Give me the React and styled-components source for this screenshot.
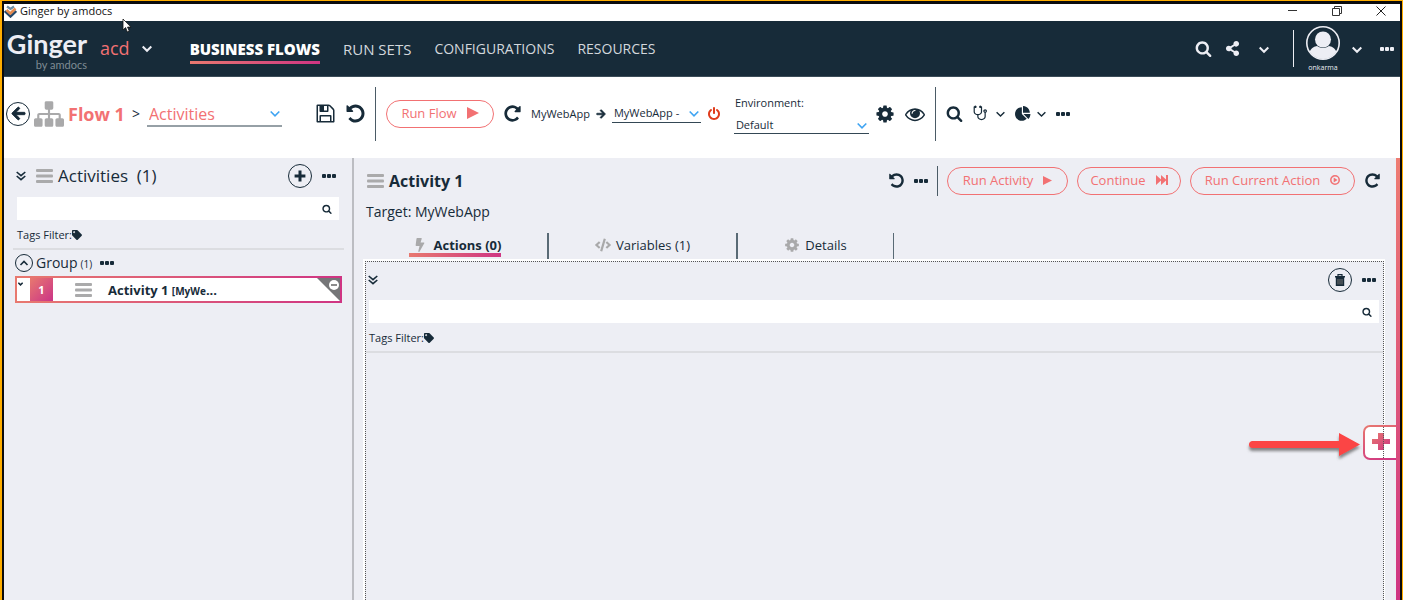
import React from "react";
import styled, { createGlobalStyle, css } from "styled-components";
import { FaArrowLeft, FaArrowRight, FaShareAlt, FaTag, FaBolt, FaCode } from "react-icons/fa";

const ink = "#172b39";
const coral = "#f27173";
const panelBg = "#edeef4";
const ginger = "linear-gradient(90deg, #e8796f, #cf3483)";

const GlobalStyle = createGlobalStyle`
  *, *::before, *::after { box-sizing: border-box; }
  body {
    margin: 0;
    font-family: "Open Sans", "Noto Sans", sans-serif;
    font-size: 14px;
    color: ${ink};
    overflow: hidden;
  }
  button, input, select { font-family: inherit; color: inherit; margin: 0; padding: 0; }
  svg { display: block; flex: none; }
`;

/* ---------- icons ---------- */

const paths = {
  repeat:
    "M1664 256v448q0 26-19 45t-45 19h-448q-42 0-59-40-17-39 14-69l138-138q-148-137-349-137-104 0-198.5 40.5t-163.5 109.5-109.5 163.5-40.5 198.5 40.5 198.5 109.5 163.5 163.5 109.5 198.5 40.5q119 0 225-52t179-147q7-10 23-12 15 0 25 9l137 138q9 8 9.5 20.5t-7.5 22.5q-109 132-264 204.5t-327 72.5q-156 0-298-61t-245-164-164-245-61-298 61-298 164-245 245-164 298-61q147 0 284.5 55.5t244.5 156.5l130-129q29-31 70-14 39 17 39 59z",
  save:
    "M512 1536h768v-384h-768v384zm896 0h128v-896q0-14-10-38.5t-20-34.5l-281-281q-10-10-34-20t-39-10v416q0 40-28 68t-68 28h-576q-40 0-68-28t-28-68v-416h-128v1280h128v-416q0-40 28-68t68-28h832q40 0 68 28t28 68v416zm-384-928v-320q0-13-9.5-22.5t-22.5-9.5h-192q-13 0-22.5 9.5t-9.5 22.5v320q0 13 9.5 22.5t22.5 9.5h192q13 0 22.5-9.5t9.5-22.5zm640 32v928q0 40-28 68t-68 28h-1344q-40 0-68-28t-28-68v-1344q0-40 28-68t68-28h928q40 0 88 20t76 48l280 280q28 28 48 76t20 88z",
  search:
    "M1216 832q0-185-131.5-316.5t-316.5-131.5-316.5 131.5-131.5 316.5 131.5 316.5 316.5 131.5 316.5-131.5 131.5-316.5zm512 832q0 52-38 90t-90 38q-54 0-90-38l-343-342q-179 124-399 124-143 0-273.5-55.5t-225-150-150-225-55.5-273.5 55.5-273.5 150-225 225-150 273.5-55.5 273.5 55.5 225 150 150 225 55.5 273.5q0 220-124 399l343 343q37 37 37 90z",
  gear:
    "M1152 896q0-106-75-181t-181-75-181 75-75 181 75 181 181 75 181-75 75-181zm512-109v222q0 12-8 23t-20 13l-185 28q-19 54-39 91 35 50 107 138 10 12 10 25t-9 23q-27 37-99 108t-94 71q-12 0-26-9l-138-108q-44 23-91 38-16 136-29 186-7 28-36 28h-222q-14 0-24.5-8.5t-11.5-21.5l-28-184q-49-16-90-37l-141 107q-10 9-25 9-14 0-25-11-126-114-165-168-7-10-7-23 0-12 8-23 15-21 51-66.5t54-70.5q-27-50-41-99l-183-27q-13-2-21-12.5t-8-23.5v-222q0-12 8-23t19-13l186-28q14-46 39-92-40-57-107-138-10-12-10-24 0-10 9-23 26-36 98.5-107.5t94.5-71.5q13 0 26 10l138 107q44-23 91-38 16-136 29-186 7-28 36-28h222q14 0 24.5 8.5t11.5 21.5l28 184q49 16 90 37l142-107q9-9 24-9 13 0 25 10 129 119 165 170 7 8 7 22 0 12-8 23-15 21-51 66.5t-54 70.5q26 50 41 98l183 28q13 2 21 12.5t8 23.5z",
  eye:
    "M1664 960q-152-236-381-353 61 104 61 225 0 185-131.5 316.5t-316.5 131.5-316.5-131.5-131.5-316.5q0-121 61-225-229 117-381 353 133 205 333.5 326.5t434.5 121.5 434.5-121.5 333.5-326.5zm-720-384q0-20-14-34t-34-14q-125 0-214.5 89.5t-89.5 214.5q0 20 14 34t34 14 34-14 14-34q0-86 61-147t147-61q20 0 34-14t14-34zm848 384q0 34-20 69-140 230-376.5 368.5t-499.5 138.5-499.5-139-376.5-368q-20-35-20-69t20-69q140-229 376.5-368t499.5-139 499.5 139 376.5 368q20 35 20 69z",
  sitemap:
    "M1792 1248v320q0 40-28 68t-68 28h-320q-40 0-68-28t-28-68v-320q0-40 28-68t68-28h96v-192h-512v192h96q40 0 68 28t28 68v320q0 40-28 68t-68 28h-320q-40 0-68-28t-28-68v-320q0-40 28-68t68-28h96v-192h-512v192h96q40 0 68 28t28 68v320q0 40-28 68t-68 28h-320q-40 0-68-28t-28-68v-320q0-40 28-68t68-28h96v-192q0-52 38-90t90-38h512v-192h-96q-40 0-68-28t-28-68v-320q0-40 28-68t68-28h320q40 0 68 28t28 68v320q0 40-28 68t-68 28h-96v192h512q52 0 90 38t38 90v192h96q40 0 68 28t28 68z",
  power:
    "M1664 896q0 156-61 298t-164 245-245 164-298 61-298-61-245-164-164-245-61-298q0-182 80.5-343t226.5-270q43-32 95.5-25t83.5 50q32 42 24.5 94.5t-49.5 84.5q-98 74-151.5 181t-53.5 228q0 104 40.5 198.5t109.5 163.5 163.5 109.5 198.5 40.5 198.5-40.5 163.5-109.5 109.5-163.5 40.5-198.5q0-121-53.5-228t-151.5-181q-42-32-49.5-84.5t24.5-94.5q31-43 84-50t95 25q146 109 226.5 270t80.5 343zm-640-768v640q0 52-38 90t-90 38-90-38-38-90v-640q0-52 38-90t90-38 90 38 38 90z",
  pie:
    "M768 890l546 546q-106 108-247.5 168t-298.5 60q-209 0-385.5-103t-279.5-279.5-103-385.5 103-385.5 279.5-279.5 385.5-103v762zm187 6h773q0 157-60 298.5t-168 247.5zm709-128h-768v-768q209 0 385.5 103t279.5 279.5 103 385.5z",
  stethoscope:
    "M1344 640q0-26-19-45t-45-19-45 19-19 45 19 45 45 19 45-19 19-45zm128 0q0 62-35.5 111t-92.5 70v395q0 159-131.5 271.5t-316.5 112.5-316.5-112.5-131.5-271.5v-132q-164-20-274-128t-110-252v-512q0-26 19-45t45-19q6 0 16 2 17-30 47-48t65-18q53 0 90.5 37.5t37.5 90.5-37.5 90.5-90.5 37.5q-33 0-64-18v402q0 106 94 181t226 75 226-75 94-181v-402q-31 18-64 18-53 0-90.5-37.5t-37.5-90.5 37.5-90.5 90.5-37.5q35 0 65 18t47 48q10-2 16-2 26 0 45 19t19 45v512q0 144-110 252t-274 128v132q0 106 94 181t226 75 226-75 94-181v-395q-57-21-92.5-70t-35.5-111q0-80 56-136t136-56 136 56 56 136z",
};

const Icon = ({ name, size = 20, flip, color = "currentColor" }) => (
  <svg width={size} height={size} viewBox="0 0 1792 1792" fill={color} aria-hidden="true">
    <path d={paths[name]} transform={flip ? "translate(1792 0) scale(-1 1)" : undefined} />
  </svg>
);

const Chevron = ({ color = "currentColor", size = 10, up, weight = 2 }) => (
  <svg width={size} height={size} viewBox="0 0 10 10" fill="none" stroke={color} strokeWidth={weight} aria-hidden="true">
    <path d={up ? "M1.5 7L5 3.5 8.5 7" : "M.7 3.5L5 7.8 9.3 3.5"} />
  </svg>
);

const Dots = () => (
  <svg width="14" height="4" viewBox="0 0 14 4" fill="currentColor" aria-hidden="true">
    <rect width="4" height="4" rx="1" />
    <rect x="5" width="4" height="4" rx="1" />
    <rect x="10" width="4" height="4" rx="1" />
  </svg>
);

const Bars = () => (
  <svg width="17" height="14" viewBox="0 0 17 14" fill="#aaaaab" aria-hidden="true">
    <rect width="17" height="3" rx="1" />
    <rect y="5.5" width="17" height="3" rx="1" />
    <rect y="11" width="17" height="3" rx="1" />
  </svg>
);

const DoubleDown = () => (
  <svg width="10" height="10" viewBox="0 0 10 10" fill="none" stroke="currentColor" strokeWidth="1.6" aria-hidden="true">
    <path d="M.7 1L5 4.6 9.3 1M.7 5L5 8.6 9.3 5" />
  </svg>
);

const Plus = () => (
  <svg width="12" height="12" viewBox="0 0 12 12" fill="currentColor" aria-hidden="true">
    <path d="M4.5.6h3v3.9h3.9v3H7.5v3.9h-3V7.5H.6v-3h3.9z" />
  </svg>
);

const Play = ({ size }) => (
  <svg width={size} height={size} viewBox="0 0 12 12" fill="currentColor" aria-hidden="true">
    <path d="M0 0L12 6 0 12z" />
  </svg>
);

const FastForward = () => (
  <svg width="12" height="10" viewBox="0 0 12 10" fill="currentColor" aria-hidden="true">
    <path d="M0 0l5 4.6V0l5 4.6V0h2v10h-2V5.4L5 10V5.4L0 10z" />
  </svg>
);

const PlayCircle = () => (
  <svg width="10" height="10" viewBox="0 0 10 10" aria-hidden="true">
    <circle cx="5" cy="5" r="4.2" fill="none" stroke="currentColor" strokeWidth="1.5" />
    <path d="M3.7 2.6L7.5 5 3.7 7.4z" fill="currentColor" />
  </svg>
);

const Trash = () => (
  <svg width="12" height="12" viewBox="0 0 12 12" aria-hidden="true">
    <path d="M4 2V.7h4V2" fill="none" stroke={ink} strokeWidth="1.2" />
    <path d="M1 2h10v1.5H1zM1.8 3.5h8.4V12H1.8z" fill={ink} />
    <path d="M4 5v5.5M6 5v5.5M8 5v5.5" stroke="#8d8580" strokeWidth=".8" />
  </svg>
);

const Avatar = () => (
  <svg width="34" height="34" viewBox="0 0 34 34" aria-hidden="true">
    <defs>
      <clipPath id="avatar-clip"><circle cx="17" cy="17" r="16" /></clipPath>
    </defs>
    <g clipPath="url(#avatar-clip)" fill={panelBg}>
      <path d="M3 34v-7q2-6 8-7 6 4 12 0 6 1 8 7v7z" />
      <circle cx="17" cy="13.5" r="8" />
    </g>
    <circle cx="17" cy="17" r="16.2" fill="none" stroke={panelBg} strokeWidth="1.6" />
  </svg>
);

const AppMark = () => (
  <svg width="13" height="13" viewBox="0 0 13 13" fill="none" aria-hidden="true">
    <path d="M3 1.5L6.5 4 10 1.5" stroke="#6f8ea3" strokeWidth="2.2" />
    <path d="M.8 6l5.7 5.5L12.2 6" stroke="#24486a" strokeWidth="2.4" />
    <path d="M2.5 5l3.8 3.5 5.2-5" stroke="#e58a4e" strokeWidth="2.6" />
  </svg>
);

/* ---------- window ---------- */

const Frame = styled.div`
  min-height: 100vh;
  display: flex;
  border: solid #ffae00;
  border-width: 1px 1px 0 2px;
`;

const Window = styled.div`
  position: relative;
  flex: 1;
  min-width: 0;
  display: flex;
  flex-direction: column;
  border: solid #0b0b0c;
  border-width: 3px 2px 0;
  background: #fff;
`;

const TitleBar = styled.div`
  height: 17px;
  display: flex;
  align-items: center;
  justify-content: space-between;
  padding: 0 14px 3px 0;
  font-size: 11px;
  line-height: 14px;
  color: #111;
`;

const Row = styled.div`
  display: flex;
  align-items: center;
  gap: ${(p) => p.$gap || 0}px;
`;

const bareButton = css`
  border: 0;
  background: none;
  display: flex;
  align-items: center;
  justify-content: center;
  cursor: pointer;
`;

const IconButton = styled.button`
  ${bareButton}
  color: ${(p) => p.$color || "inherit"};
`;

const CircleButton = styled.button`
  ${bareButton}
  width: ${(p) => p.$size || 24}px;
  height: ${(p) => p.$size || 24}px;
  border: 1px solid ${ink};
  border-radius: 50%;
`;

const Cursor = styled.svg`
  position: absolute;
  left: 118px;
  top: 14px;
`;

/* ---------- navigation ---------- */

const NavBar = styled.header`
  height: 56px;
  display: flex;
  align-items: center;
  justify-content: space-between;
  padding: 0 6px 0 1px;
  background: ${ink};
  border-bottom: 1px solid #3b4c58;
  color: ${panelBg};
`;

const Brand = styled.div`
  width: 82px;
  display: flex;
  flex-direction: column;
  align-items: flex-end;
  padding-top: 2px;
  font-family: Lato, "Open Sans", sans-serif;
  font-weight: 700;
  font-size: 27px;
  line-height: 30px;
  color: ${panelBg};
`;

const Byline = styled.span`
  font-weight: 400;
  font-size: 11px;
  line-height: 11px;
  color: #7f8b94;
`;

const Solution = styled.button`
  ${bareButton}
  gap: 12px;
  padding: 0 0 2px 13px;
  font-size: 18px;
  line-height: 24px;
  color: ${coral};
`;

const NavLinks = styled.nav`
  display: flex;
  align-items: center;
  gap: 23px;
  padding-left: 38px;
`;

const NavLink = styled.a`
  padding: 5px 0 1px;
  border-bottom: 3px solid transparent;
  font-size: ${(p) => (p.$large ? 15 : 14)}px;
  line-height: 22px;
  color: #d3d8dd;
  text-decoration: none;
  ${(p) =>
    p.$active &&
    css`
      font-weight: 800;
      color: #fff;
      border-image: ${ginger} 1;
    `}
`;

const Rule = styled.span`
  width: 1px;
  height: ${(p) => p.$height}px;
  background: ${(p) => p.$color || "#4b5b66"};
`;

const User = styled.div`
  width: 34px;
  display: flex;
  flex-direction: column;
  align-items: center;
  font-size: 7px;
  line-height: 10px;
  padding-top: 1px;
  gap: 3px;
`;

/* ---------- flow toolbar ---------- */

const ToolBar = styled.div`
  height: 81px;
  display: flex;
  align-items: center;
  padding: 0 2px 8px;
`;

const FlowArea = styled.div`
  width: 369px;
  display: flex;
  align-items: center;
  justify-content: space-between;
  padding-right: 9px;
`;

const FlowName = styled.strong`
  font-size: 18px;
  line-height: 24px;
  color: ${coral};
`;

const Crumb = styled.span`
  font-size: 14px;
  line-height: 20px;
`;

const SelectBox = styled.div`
  display: flex;
  align-items: center;
  width: ${(p) => p.$width}px;
  border-bottom: ${(p) => (p.$large ? 2 : 1)}px solid ${(p) => (p.$large ? "#96a0a6" : "#344855")};
  color: ${(p) => (p.$large ? coral : ink)};
  font-size: ${(p) => (p.$large ? 16 : 11)}px;
  line-height: ${(p) => (p.$large ? 22 : 16)}px;
  padding: 0 2px;

  select {
    flex: 1;
    min-width: 0;
    height: ${(p) => (p.$large ? 24 : 17)}px;
    padding-top: ${(p) => (p.$large ? 2 : 0)}px;
    border: 0;
    background: none;
    appearance: none;
    font-size: inherit;
    line-height: inherit;
  }
`;

const Dropdown = ({ id, label, value, width, large }) => (
  <SelectBox $width={width} $large={large}>
    <select id={id} aria-label={label} defaultValue={value}>
      <option>{value}</option>
    </select>
    <Chevron color="#3fa4f2" weight={1.6} />
  </SelectBox>
);

const PillButton = styled.button`
  ${bareButton}
  gap: 10px;
  width: ${(p) => p.$width}px;
  height: 28px;
  border: 1px solid ${coral};
  border-radius: 14px;
  padding-bottom: 1px;
  font-size: 13px;
  line-height: 18px;
  color: ${coral};
`;

const Small = styled.span`
  font-size: 11px;
  line-height: 16px;
`;

const Environment = styled.div`
  display: flex;
  flex-direction: column;
  gap: 5px;
  padding-top: 2px;
  font-size: 11px;
  line-height: 16px;

  label { padding-left: 1px; }
`;

const ToolGroup = styled(Row)`
  padding: 0 10px;
`;

/* ---------- panels ---------- */

const Main = styled.main`
  position: relative;
  flex: 1;
  display: flex;
  background: ${panelBg};
`;

const Activities = styled.section`
  width: 350px;
  flex: none;
  border-right: 2px solid #bcbdc2;
  padding: 6px 8px 0 9px;
`;

const PanelHead = styled.div`
  height: 24px;
  display: flex;
  align-items: center;
  justify-content: space-between;
  padding: 0 8px 0 3px;
`;

const PanelTitle = styled.h2`
  margin: 0;
  font-size: 17px;
  line-height: 24px;
  font-weight: 400;
  white-space: pre;
`;

const SearchBox = styled.div`
  height: 23px;
  display: flex;
  align-items: center;
  background: #fff;
  padding: 0 7px;
  margin: 9px 5px 0 4px;

  input {
    flex: 1;
    min-width: 0;
    height: 21px;
    border: 0;
    outline: 0;
    background: none;
    font-size: 12px;
  }
`;

const Tags = styled.div`
  height: 30px;
  display: flex;
  align-items: center;
  padding: 2px 0 0 4px;
  border-bottom: 2px solid #dcdde1;
  font-size: 11px;
  line-height: 16px;
`;

const GroupRow = styled.div`
  height: 26px;
  display: flex;
  align-items: center;
  gap: 3px;
  padding-left: 2px;
  font-size: 14px;
  line-height: 20px;
`;

const Count = styled.span`
  font-size: 10px;
  line-height: 12px;
  padding: 2px 5px 0 0;
`;

const ActivityItem = styled.div`
  height: 27px;
  margin: 0 2px;
  display: flex;
  border: 2px solid transparent;
  background: linear-gradient(#fff, #fff) padding-box, ${ginger} border-box;
`;

const Expander = styled.div`
  width: 13px;
  padding: 3px 0 0 1px;
`;

const Index = styled.div`
  width: 23px;
  display: flex;
  align-items: center;
  justify-content: center;
  background: linear-gradient(135deg, #e8796f, #cb3487);
  color: #fff;
  font-size: 11px;
  font-weight: 700;
`;

const ItemName = styled.div`
  flex: 1;
  display: flex;
  align-items: center;
  gap: 16px;
  padding: 1px 0 0 22px;
  font-size: 13px;
  line-height: 18px;
  font-weight: 700;

  small { font-size: 10px; }
`;

const Detail = styled.section`
  flex: 1;
  min-width: 0;
  display: flex;
  flex-direction: column;
  padding: 8px 11px 0 9px;
`;

const DetailHead = styled.div`
  height: 29px;
  display: flex;
  align-items: center;
  justify-content: space-between;
  padding: 0 4px;
`;

const DetailTitle = styled.h1`
  margin: 0;
  font-size: 16px;
  line-height: 22px;
`;

const Target = styled.p`
  margin: 0;
  padding: 7px 3px 6px;
  font-size: 14px;
  line-height: 20px;
`;

const Tabs = styled.div`
  height: 31px;
  display: flex;
  padding: 5px 0 0;
`;

const Tab = styled.button`
  ${bareButton}
  align-items: flex-start;
  width: ${(p) => p.$width}px;
  border-right: ${(p) => (p.$last ? 1 : 2)}px solid #596a75;
  font-size: 13px;
  line-height: 16px;
  font-weight: ${(p) => (p.$active ? 700 : 400)};
`;

const TabLabel = styled.span`
  display: flex;
  align-items: center;
  gap: ${(p) => (p.$active ? 7 : 5)}px;
  padding: 4px 0 0 ${(p) => (p.$active ? 4 : 0)}px;
  border-bottom: 4px solid transparent;
  ${(p) => p.$active && css`border-image: ${ginger} 1;`}

  svg { color: #a9a9aa; }
`;

const BoxOuter = styled.div`
  flex: 1;
  display: flex;
  border: solid #fff;
  border-width: 2px 1px 0 2px;
`;

const Box = styled.div`
  flex: 1;
  min-width: 0;
  border: 1px dotted #555;
  border-bottom: 0;
  padding-top: 6px;
`;

const BoxHead = styled(PanelHead)`
  padding: 0 7px 0 2px;
`;

const BoxSearch = styled(SearchBox)`
  margin: 8px 4px 0 3px;
`;

const BoxTags = styled(Tags)`
  padding-left: 3px;
`;

const SideStrip = styled.div`
  width: 4px;
  background: linear-gradient(180deg, #ee7c72, #cf3483);
`;

const AddTab = styled.button`
  ${bareButton}
  position: absolute;
  right: 4px;
  top: 267px;
  width: 33px;
  height: 35px;
  border: 2px solid transparent;
  border-right: 0;
  border-radius: 7px 0 0 7px;
  background: linear-gradient(#fff, #fff) padding-box, linear-gradient(160deg, #e8796f, #cf3483) border-box;

  &::after {
    content: "";
    position: absolute;
    right: 12px;
    top: 0;
    bottom: 0;
    border-right: 1px dotted #555;
  }
`;

const Pointer = styled.svg`
  position: absolute;
  right: 38px;
  top: 270px;
`;

export default function App() {
  return (
    <>
      <GlobalStyle />
      <Frame>
        <Window>
          <TitleBar>
            <Row $gap={3}>
              <AppMark />
              <span>Ginger by amdocs</span>
            </Row>
            <Row $gap={34}>
              <IconButton aria-label="Minimize">
                <svg width="10" height="10" viewBox="0 0 10 10"><path d="M0 4.5h9" stroke="#333" /></svg>
              </IconButton>
              <IconButton aria-label="Restore">
                <svg width="10" height="10" viewBox="0 0 10 10" fill="none" stroke="#333">
                  <path d="M.5 2.5h7v7h-7zM2.5 2.500V.5h7v7h-2" />
                </svg>
              </IconButton>
              <IconButton aria-label="Close">
                <svg width="10" height="10" viewBox="0 0 10 10" stroke="#222"><path d="M.5.5l9 9M9.5.5l-9 9" /></svg>
              </IconButton>
            </Row>
          </TitleBar>

          <NavBar>
            <Row>
              <Brand>
                Ginger
                <Byline>by amdocs</Byline>
              </Brand>
              <Solution>
                acd
                <Chevron color={panelBg} />
              </Solution>
              <NavLinks>
                <NavLink href="#flows" $active $large>BUSINESS FLOWS</NavLink>
                <NavLink href="#sets" $large>RUN SETS</NavLink>
                <NavLink href="#config">CONFIGURATIONS</NavLink>
                <NavLink href="#resources">RESOURCES</NavLink>
              </NavLinks>
            </Row>
            <Row $gap={12}>
              <Row $gap={19}>
                <Row $gap={13}>
                  <IconButton aria-label="Search"><Icon name="search" size={17} /></IconButton>
                  <IconButton aria-label="Share"><FaShareAlt size={15} /></IconButton>
                </Row>
                <Row $gap={24}>
                  <IconButton aria-label="Share options"><Chevron /></IconButton>
                  <Rule $height={37} $color={panelBg} />
                </Row>
              </Row>
              <User>
                <Avatar />
                <span>onkarma</span>
              </User>
              <Row $gap={18}>
                <IconButton aria-label="User menu"><Chevron /></IconButton>
                <IconButton aria-label="More"><Dots /></IconButton>
              </Row>
            </Row>
          </NavBar>

          <ToolBar>
            <FlowArea>
              <Row $gap={4}>
                <CircleButton aria-label="Back">
                  <FaArrowLeft size={15} stroke="currentColor" strokeWidth={32} />
                </CircleButton>
                <Icon name="sitemap" size={30} color="#a9a9aa" />
                <Row $gap={7}>
                  <FlowName>Flow 1</FlowName>
                  <Crumb>&gt;</Crumb>
                  <Dropdown label="Flow view" value="Activities" width={135} large />
                </Row>
              </Row>
              <Row $gap={9}>
                <IconButton aria-label="Save"><Icon name="save" size={21} /></IconButton>
                <IconButton aria-label="Undo"><Icon name="repeat" size={21} flip /></IconButton>
              </Row>
            </FlowArea>
            <Rule $height={54} />
            <ToolGroup $gap={9}>
              <PillButton $width={108}>
                Run Flow
                <Play size={12} />
              </PillButton>
              <IconButton aria-label="Reset flow"><Icon name="repeat" size={19} /></IconButton>
              <Row $gap={6}>
                <Small>MyWebApp</Small>
                <FaArrowRight size={10} stroke="currentColor" strokeWidth={32} />
                <Dropdown label="Agent" value="MyWebApp -" width={89} />
                <IconButton aria-label="Start agent" $color="#e03c1c"><Icon name="power" size={14} /></IconButton>
              </Row>
              <Row $gap={6}>
                <Row $gap={0}>
                  <ToolSpacer />
                  <Environment>
                    <label htmlFor="environment">Environment:</label>
                    <Dropdown id="environment" value="Default" width={135} />
                  </Environment>
                </Row>
                <Row $gap={10}>
                  <IconButton aria-label="Settings"><Icon name="gear" size={20} /></IconButton>
                  <IconButton aria-label="Preview"><Icon name="eye" size={20} /></IconButton>
                </Row>
              </Row>
            </ToolGroup>
            <Rule $height={54} />
            <ToolGroup $gap={10}>
              <IconButton aria-label="Find"><Icon name="search" size={17} /></IconButton>
              <Row $gap={6}>
                <IconButton aria-label="Analyze"><Icon name="stethoscope" size={17} /></IconButton>
                <Chevron weight={1.6} size={9} />
              </Row>
              <Row $gap={6}>
                <IconButton aria-label="Reports"><Icon name="pie" size={16} /></IconButton>
                <Chevron weight={1.6} size={9} />
              </Row>
              <IconButton aria-label="More tools"><Dots /></IconButton>
            </ToolGroup>
          </ToolBar>

          <Main>
            <Activities>
              <PanelHead>
                <Row $gap={10}>
                  <IconButton aria-label="Expand all"><DoubleDown /></IconButton>
                  <Row $gap={5}>
                    <Bars />
                    <PanelTitle>Activities  (1)</PanelTitle>
                  </Row>
                </Row>
                <Row $gap={10}>
                  <CircleButton aria-label="Add activity"><Plus /></CircleButton>
                  <IconButton aria-label="Activities menu"><Dots /></IconButton>
                </Row>
              </PanelHead>
              <SearchBox>
                <input aria-label="Search activities" />
                <Icon name="search" size={10} />
              </SearchBox>
              <Tags>Tags Filter:<FaTag size={10} /></Tags>
              <GroupRow>
                <CircleButton $size={18} aria-label="Collapse group"><Chevron up weight={1.6} /></CircleButton>
                Group
                <Count>(1)</Count>
                <IconButton aria-label="Group menu"><Dots /></IconButton>
              </GroupRow>
              <ActivityItem>
                <Expander><Chevron size={5} weight={3} /></Expander>
                <Index>1</Index>
                <ItemName>
                  <Bars />
                  <span>Activity 1 <small>[MyWe</small>...</span>
                </ItemName>
                <svg width="23" height="23" viewBox="0 0 23 23" aria-hidden="true">
                  <path d="M0 0h23v23z" fill="#757678" />
                  <circle cx="17" cy="7" r="5" fill="#fff" />
                  <path d="M14 7h6" stroke="#666" strokeWidth="1.5" />
                </svg>
              </ActivityItem>
            </Activities>

            <Detail>
              <DetailHead>
                <Row $gap={5}>
                  <Bars />
                  <DetailTitle>Activity 1</DetailTitle>
                </Row>
                <Row $gap={9}>
                  <Row $gap={9}>
                    <IconButton aria-label="Undo changes"><Icon name="repeat" size={17} flip /></IconButton>
                    <IconButton aria-label="Activity menu"><Dots /></IconButton>
                    <Rule $height={30} />
                  </Row>
                  <PillButton $width={121}>Run Activity<Play size={9} /></PillButton>
                  <PillButton $width={104}>Continue<FastForward /></PillButton>
                  <PillButton $width={165}>Run Current Action<PlayCircle /></PillButton>
                  <IconButton aria-label="Reset activity"><Icon name="repeat" size={17} /></IconButton>
                </Row>
              </DetailHead>
              <Target>Target: MyWebApp</Target>
              <Tabs role="tablist">
                <Tab role="tab" aria-selected="true" $width={186} $active>
                  <TabLabel $active><FaBolt size={14} />Actions (0)</TabLabel>
                </Tab>
                <Tab role="tab" $width={189}>
                  <TabLabel><FaCode size={16} />Variables (1)</TabLabel>
                </Tab>
                <Tab role="tab" $width={156} $last>
                  <TabLabel><Icon name="gear" size={16} />Details</TabLabel>
                </Tab>
              </Tabs>
              <BoxOuter>
                <Box>
                  <BoxHead>
                    <IconButton aria-label="Expand actions"><DoubleDown /></IconButton>
                    <Row $gap={10}>
                      <CircleButton aria-label="Delete all"><Trash /></CircleButton>
                      <IconButton aria-label="Actions menu"><Dots /></IconButton>
                    </Row>
                  </BoxHead>
                  <BoxSearch>
                    <input aria-label="Search actions" />
                    <Icon name="search" size={10} />
                  </BoxSearch>
                  <BoxTags>Tags Filter:<FaTag size={10} /></BoxTags>
                </Box>
              </BoxOuter>
            </Detail>

            <SideStrip />
            <AddTab aria-label="Add action">
              <svg width="20" height="20" viewBox="0 0 20 20" aria-hidden="true">
                <defs>
                  <linearGradient id="plus-fill" x1="0" y1="0" x2="1" y2="1">
                    <stop offset="0" stopColor="#e8796f" />
                    <stop offset="1" stopColor="#cf3483" />
                  </linearGradient>
                </defs>
                <path d="M7 0h6v6h6v5h-6v6H7v-6H1V6h6z" fill="url(#plus-fill)" />
              </svg>
            </AddTab>
            <Pointer width="116" height="34" viewBox="0 0 116 34" aria-hidden="true">
              <defs>
                <filter id="arrow-shadow" x="-10%" y="-20%" width="120%" height="160%">
                  <feDropShadow dx="0" dy="3" stdDeviation="1.5" floodColor="#555" floodOpacity=".7" />
                </filter>
              </defs>
              <path
                d="M6 13h87V5l21 11.5L93 28v-8H6q-3-.5-3-3.5t3-3.5z"
                fill="#fb4444"
                filter="url(#arrow-shadow)"
              />
            </Pointer>
          </Main>
          <Cursor width="10" height="15" viewBox="0 0 10 15" aria-hidden="true">
            <path d="M1 1v11l2.6-2.500L5.300 14l2-.9-1.800-4H9z" fill="#fff" stroke="#111" strokeWidth=".8" />
          </Cursor>
        </Window>
      </Frame>
    </>
  );
}

const ToolSpacer = styled.span`
  width: 4px;
`;
